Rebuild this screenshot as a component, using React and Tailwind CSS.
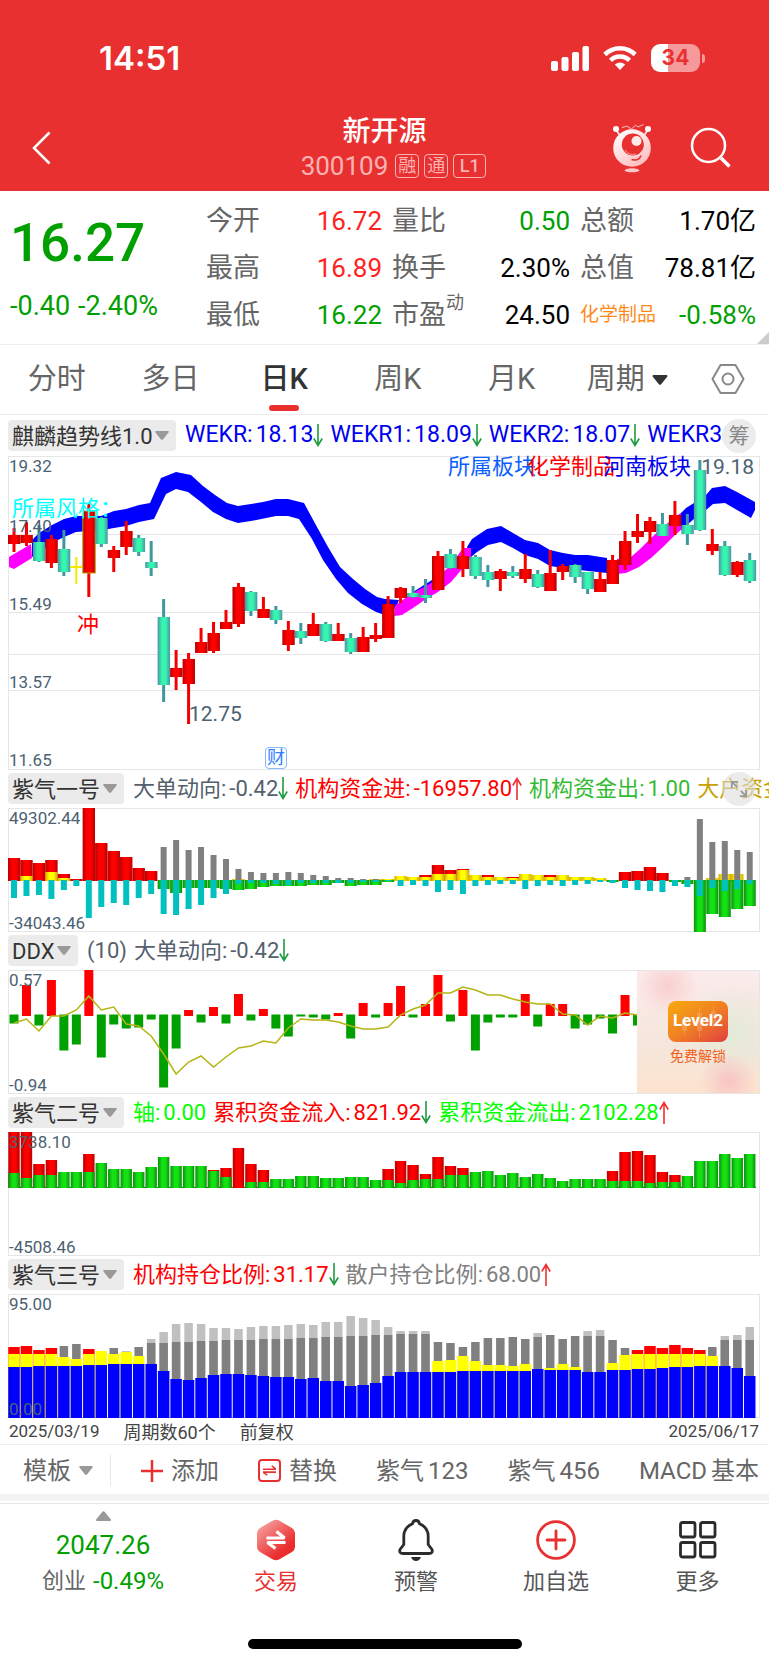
import React, { useState } from 'react';
import clsx from 'clsx';

// centre of the i-th of the 60 sessions, in chart units
const STEP = 12.47;
const cx = (i) => 6 + STEP * i;

// [high, body top, body bottom, low, kind]
const CANDLES = [
  [72, 79, 88, 96, 'r'], [66, 79, 87, 90, 'r'], [69, 86, 105, 106, 'g'], [79, 83, 107, 112, 'r'], [74, 93, 116, 120, 'g'],
  [101, 111, 112, 128, 'y'], [48, 55, 117, 141, 'h'], [61, 62, 88, 91, 'g'], [90, 94, 102, 116, 'r'], [65, 75, 91, 99, 'r'],
  [79, 82, 96, 100, 'g'], [85, 106, 112, 120, 'g'], [143, 161, 229, 246, 'g'], [194, 212, 221, 234, 'r'], [197, 203, 228, 268, 'r'],
  [172, 186, 197, 197, 'r'], [166, 177, 195, 197, 'r'], [154, 166, 173, 173, 'r'], [127, 131, 168, 171, 'r'], [135, 136, 155, 160, 'g'],
  [141, 153, 162, 162, 'r'], [150, 154, 164, 168, 'g'], [165, 174, 189, 195, 'r'], [167, 175, 182, 188, 'g'], [157, 168, 180, 180, 'r'],
  [166, 168, 185, 186, 'g'], [167, 178, 185, 185, 'r'], [177, 182, 196, 198, 'g'], [171, 181, 196, 196, 'r'], [167, 179, 183, 186, 'r'],
  [140, 148, 182, 182, 'r'], [131, 132, 142, 147, 'r'], [130, 137, 141, 142, 'g'], [123, 139, 142, 147, 'g'], [95, 100, 134, 134, 'r'],
  [93, 98, 112, 113, 'g'], [85, 100, 113, 121, 'r'], [99, 101, 120, 123, 'g'], [109, 116, 124, 131, 'g'], [113, 115, 123, 135, 'r'],
  [110, 116, 120, 122, 'g'], [98, 113, 123, 127, 'r'], [114, 118, 131, 132, 'g'], [94, 117, 135, 135, 'r'], [108, 110, 116, 124, 'r'],
  [108, 109, 121, 127, 'g'], [116, 116, 133, 138, 'g'], [116, 123, 136, 136, 'r'], [99, 104, 128, 128, 'r'], [75, 85, 109, 114, 'r'],
  [58, 75, 81, 87, 'r'], [61, 65, 76, 88, 'r'], [57, 68, 80, 80, 'g'], [45, 59, 70, 79, 'r'], [58, 69, 78, 89, 'g'],
  [4, 14, 74, 75, 'g'], [73, 88, 95, 99, 'r'], [85, 90, 119, 120, 'g'], [105, 106, 119, 121, 'r'], [97, 104, 125, 127, 'g'],
];

const BLUE_BANDS = [
  '24,84 31,77 44,69 56,63 68,60 93,60 106,55 118,53 131,49 142,47 153,22 168,16 183,19 195,30 207,39 219,47 230,50 243,48 255,46 268,43 280,43 296,47 309,71 320,91 332,111 345,123 357,133 369,141 377,143 391,144 388,152 374,158 368,156 354,148 340,137 328,123 315,104 304,83 291,63 280,60 268,60 243,65 230,67 218,63 205,56 193,46 180,36 168,33 158,38 146,63 131,66 118,70 106,72 95,74 68,76 56,81 44,87 24,101',
  '405,136 424,124 424,128 405,138',
  '459,91 464,83 479,73 493,70 505,77 517,84 530,87 542,94 555,97 567,99 580,99 599,102 599,117 580,115 555,112 542,110 530,103 517,99 505,92 493,86 480,89 469,96 463,101',
  '671,59 678,52 686,47 698,39 704,32 717,30 729,36 747,46 747,54 743,62 729,54 717,47 705,48 698,54 686,63 673,74',
];

const PINK_BANDS = [
  '1,101 23,88 24,102 6,113 1,111',
  '387,150 393,145 405,137 423,127 443,109 455,92 463,92 463,101 455,112 443,126 430,136 418,143 405,152 394,159 386,160',
  '609,103 623,101 631,94 643,82 655,71 667,61 673,57 673,74 667,79 655,91 643,102 631,111 618,117 609,118',
];

// fund flow, bar heights from the zero line
const FLOW_RED = { 0: 23, 1: 21, 2: 18, 3: 21, 4: 7, 5: 2, 6: 73, 7: 38, 8: 30, 9: 24, 10: 13, 11: 10, 33: 6, 34: 16, 35: 11, 36: 12, 38: 6, 40: 4, 43: 6, 49: 9, 50: 10, 51: 14, 52: 8 };
const FLOW_YELLOW = { 1: 5, 3: 9, 4: 3, 18: 2, 29: 2, 30: 2, 31: 5, 32: 4, 33: 4, 34: 7, 35: 7, 36: 11, 37: 6, 38: 4, 39: 4, 40: 3, 41: 7, 42: 6, 43: 4, 44: 6, 45: 4, 46: 4, 47: 3, 56: 3, 57: 7, 58: 7 };
const FLOW_GRAY = { 12: 34, 13: 41, 14: 31, 15: 34, 16: 26, 17: 22, 18: 12, 19: 9, 20: 8, 21: 8, 22: 9, 23: 8, 24: 6, 25: 5, 26: 3, 27: 3, 28: 2, 29: 2, 30: 1, 54: 4, 55: 62, 56: 39, 57: 40, 58: 31, 59: 29 };
const FLOW_GREEN = { 12: 9, 13: 13, 14: 8, 15: 8, 16: 8, 17: 9, 18: 10, 19: 9, 20: 7, 21: 6, 22: 6, 23: 6, 24: 5, 25: 5, 26: 3, 27: 6, 28: 5, 29: 5, 30: 2, 48: 2, 53: 2, 54: 4, 55: 52, 56: 34, 57: 37, 58: 29, 59: 26 };
const FLOW_CYAN = [18, 16, 15, 19, 10, 6, 38, 27, 23, 25, 18, 14, 34, 35, 29, 25, 18, 14, 4, 3, 3, 4, 5, 3, 3, 3, 3, 3, 2, 2, 1, 6, 5, 6, 12, 10, 14, 6, 5, 4, 4, 9, 6, 5, 6, 5, 4, 2, 3, 8, 10, 11, 12, 6, 7, 16, 8, 11, 9, 4];

const DDX = [-9, 31, -11, 36, -36, -30, 47, -43, -10, -14, -13, -5, -73, -34, 6, -8, 9, -9, 22, -6, 7, -14, -22, -2, -3, -5, 3, -24, 13, -3, 13, 30, -3, 12, 41, -7, 26, -36, -8, -3, -3, 22, -12, 12, 12, -14, -10, -4, -19, 21, -11];
const DDX_LINE = [53, 49, 61, 46, 46, 40, 26, 40, 37, 54, 56, 66, 84, 104, 92, 86, 97, 87, 78, 76, 71, 73, 58, 49, 50, 50, 52, 56, 59, 59, 57, 45, 39, 35, 23, 23, 17, 20, 25, 25, 29, 32, 34, 34, 44, 45, 55, 46, 48, 43, 45];

const TOTAL_GREEN = [15, 10, 13, 13, 16, 16, 16, 25, 19, 19, 16, 21, 31, 22, 22, 22, 17, 11, 0, 6, 6, 9, 9, 12, 12, 10, 10, 11, 11, 8, 8, 5, 8, 9, 9, 13, 13, 16, 17, 13, 15, 11, 14, 10, 7, 9, 9, 9, 7, 7, 7, 5, 6, 6, 12, 27, 27, 34, 30, 34];
const TOTAL_RED = { 0: 57, 1: 57, 2: 24, 3: 28, 6: 34, 16: 18, 17: 20, 18: 40, 19: 24, 20: 18, 30: 19, 31: 27, 32: 23, 33: 14, 34: 31, 35: 22, 36: 20, 48: 17, 49: 36, 50: 37, 51: 33, 52: 16, 53: 13 };

const HOLD_BLUE = [51, 51, 52, 52, 52, 52, 53, 53, 54, 54, 54, 54, 47, 39, 38, 40, 43, 44, 44, 43, 42, 41, 41, 39, 40, 37, 37, 32, 33, 35, 42, 46, 46, 46, 46, 46, 47, 47, 47, 47, 47, 47, 49, 48, 48, 48, 46, 46, 48, 48, 49, 49, 50, 51, 51, 52, 52, 52, 50, 42];
const HOLD_YELLOW = { 0: 64, 1: 64, 2: 64, 3: 64, 4: 61, 5: 59, 6: 64, 7: 67, 8: 64, 9: 66, 10: 62, 34: 57, 35: 58, 36: 62, 37: 57, 38: 53, 39: 53, 40: 52, 41: 54, 43: 50, 44: 54, 45: 51, 48: 55, 49: 63, 50: 64, 51: 64, 52: 64, 53: 64, 54: 64, 55: 64, 56: 62 };
const HOLD_RED = { 0: 71, 1: 72, 2: 68, 3: 70, 6: 69, 50: 68, 51: 72, 52: 70, 53: 73, 54: 70, 55: 68 };
const HOLD_DARK = { 4: 72, 5: 74, 8: 70, 10: 71, 11: 75, 12: 75, 13: 76, 14: 76, 15: 77, 16: 77, 17: 78, 18: 78, 19: 78, 20: 79, 21: 79, 22: 79, 23: 80, 24: 80, 25: 81, 26: 81, 27: 82, 28: 82, 29: 83, 30: 83, 31: 84, 32: 84, 33: 84, 34: 76, 35: 75, 36: 71, 37: 76, 38: 80, 39: 80, 40: 81, 41: 79, 42: 81, 43: 83, 44: 79, 45: 82, 46: 82, 47: 82, 48: 78, 49: 70, 56: 71, 57: 78, 58: 78, 59: 78 };
const HOLD_LIGHT = { 9: 67, 11: 79, 12: 86, 13: 94, 14: 95, 15: 94, 16: 90, 17: 90, 18: 89, 19: 91, 20: 92, 21: 92, 22: 93, 23: 94, 24: 93, 25: 96, 26: 96, 27: 102, 28: 100, 29: 98, 30: 91, 31: 87, 32: 87, 33: 87, 42: 85, 46: 87, 47: 88, 57: 82, 58: 83, 59: 91 };

const Bars = ({ data, base, width, fill, down }) =>
  Object.entries(data).map(([i, h]) => (
    <rect key={i} x={cx(Number(i)) - width / 2} y={down ? base : base - h} width={width} height={h} fill={fill} />
  ));

function Chart({ height, lines = [], children }) {
  return (
    <svg
      viewBox={`0 0 752 ${height}`}
      preserveAspectRatio="none"
      className={clsx('block w-full', height === 314 ? 'h-[314px]' : 'h-[124px]')}
      aria-hidden="true"
    >
      <rect x="0.5" y="0.5" width="751" height={height - 1} fill="#fff" stroke="#e6e6e6" />
      {lines.map((y) => (
        <line key={y} x1="0" x2="752" y1={y + 0.5} y2={y + 0.5} stroke="#e6e6e6" />
      ))}
      {children}
    </svg>
  );
}

function Gradients() {
  const items = [
    ['gRed', '#b80000', '#ff0000'],
    ['gTeal', '#4a93a6', '#36f5ae'],
    ['gGreen', '#0a8f0a', '#14e014'],
    ['gYellow', '#d9a800', '#ffff00'],
  ];
  return (
    <svg className="absolute size-0" aria-hidden="true">
      <defs>
        {items.map(([id, edge, mid]) => (
          <linearGradient key={id} id={id}>
            <stop offset="0" stopColor={edge} />
            <stop offset="0.35" stopColor={mid} />
            <stop offset="0.65" stopColor={mid} />
            <stop offset="1" stopColor={edge} />
          </linearGradient>
        ))}
      </defs>
    </svg>
  );
}

function Candle({ i, d }) {
  const [high, top, bottom, low, kind] = d;
  const x = cx(i);
  if (kind === 'y') {
    return <path d={`M${x} ${high}V${low}M${x - 6} ${top}H${x + 6}`} stroke="#f5e800" strokeWidth="2" />;
  }
  const green = kind === 'g';
  return (
    <g>
      <rect x={x - 1.5} y={high} width="3" height={low - high} fill={green ? '#3f97a0' : '#f50000'} />
      <rect
        x={x - 6}
        y={top}
        width="12.4"
        height={bottom - top}
        fill={green ? 'url(#gTeal)' : 'url(#gRed)'}
        stroke={kind === 'h' ? '#b8a000' : 'none'}
      />
    </g>
  );
}

function Arrow({ up }) {
  return (
    <svg viewBox="0 0 10 23" className="h-[23px] w-[10px] shrink-0" fill="none" strokeWidth="1.6" aria-hidden="true">
      {up ? (
        <path d="M5 23V1M0.8 8.500L5 1.500L9.200 8.500" stroke="#f03030" />
      ) : (
        <path d="M5 0V22M0.800 14.500L5 21.500L9.200 14.500" stroke="#1f9c40" />
      )}
    </svg>
  );
}

function Caret({ className, up }) {
  return (
    <svg viewBox="0 0 14 9" className={clsx('pointer-events-none shrink-0', className)} fill="currentColor" aria-hidden="true">
      <path d={up ? 'M1 9H13Q14.300 8.500 13.500 7.500L8 .6Q7 -.3 6 .6L.5 7.500Q-.3 8.500 1 9Z' : 'M1 0H13Q14.300 .5 13.500 1.500L8 8.400Q7 9.300 6 8.400L.5 1.500Q-.3 .5 1 0Z'} />
    </svg>
  );
}

function IndicatorSelect({ name }) {
  return (
    <label className="mr-[2px] flex h-[31px] shrink-0 items-center rounded bg-[#ebebeb] pr-[7px] pl-1 text-[22px] text-[#333]">
      <select className="h-full appearance-none bg-transparent outline-none" aria-label="指标">
        <option>{name}</option>
      </select>
      <Caret className="ml-[2px] h-[9px] w-[14px] text-[#999]" />
    </label>
  );
}

// one "label:value" reading next to the indicator name
function Reading({ label, value, trend, color }) {
  return (
    <span className={clsx('flex shrink-0 items-center gap-[3px]', color)}>
      <span>{label}:</span>
      <span className="flex items-center">
        {value}
        {trend && <Arrow up={trend === 'up'} />}
      </span>
    </span>
  );
}

function PanelHeader({ name, children, className }) {
  return (
    <div className={clsx('flex items-center gap-[7px] overflow-hidden text-[22px] whitespace-nowrap', className || 'h-[38px] pb-[2px]')}>
      <IndicatorSelect name={name} />
      {children}
    </div>
  );
}

function AxisLabel({ className, children }) {
  return <span className={clsx('absolute left-px text-[17px] leading-5 text-[#4c6172]', className)}>{children}</span>;
}

function StatusBar() {
  return (
    <div className="flex h-[104px] items-center justify-between pt-[12px] pr-[64px] pl-[99px] text-white">
      <span className="font-['Inter'] text-[33px] leading-9 font-semibold">14:51</span>
      <div className="flex items-center gap-[14px]">
        <svg viewBox="0 0 38 25" className="h-[25px] w-[38px]" fill="currentColor" aria-hidden="true">
          <rect x="0" y="15" width="7" height="10" rx="2" />
          <rect x="10.500" y="11" width="7" height="14" rx="2" />
          <rect x="21" y="6" width="7" height="19" rx="2" />
          <rect x="31.500" y="0" width="6.500" height="25" rx="2" />
        </svg>
        <svg viewBox="0 0 34 24" className="h-[24px] w-[34px]" fill="none" stroke="currentColor" strokeWidth="4.500" aria-hidden="true">
          <path d="M1.800 8.500C10.500 .2 23.500 .2 32.200 8.500" />
          <path d="M7.500 14.300C13 9.200 21 9.200 26.500 14.300" />
          <path d="M17 24L11.800 18.600Q17 14.200 22.200 18.600Z" fill="currentColor" stroke="none" />
        </svg>
        <div className="flex items-center">
          <div className="flex h-[28px] w-[49px] items-center justify-center rounded-[9px] bg-linear-to-r from-white from-35% to-[#f59a9a] to-35% font-['Inter'] text-[21px] font-bold text-[#e93030]">
            34
          </div>
          <div className="ml-[2px] h-[9px] w-[3px] rounded-r bg-[#f59a9a]" />
        </div>
      </div>
    </div>
  );
}

function Mascot() {
  return (
    <svg viewBox="0 0 40 50" className="h-[50px] w-[40px]" fill="none" aria-hidden="true">
      <defs>
        <linearGradient id="mascot" x1="0.2" y1="0" x2="0.8" y2="1">
          <stop offset="0" stopColor="#fff" />
          <stop offset="1" stopColor="#ffb9bb" />
        </linearGradient>
      </defs>
      <path d="M4 7L8.500 13M36 7L31.500 13" stroke="#fff" strokeWidth="1.500" />
      <circle cx="4" cy="6" r="3" fill="#fff" />
      <circle cx="36" cy="6" r="3" fill="#fff" />
      <path d="M10 4.500L15 3.200L19.500 6L23.500 2.200L26 4L31.500 1.500" stroke="#fff" strokeOpacity="0.7" />
      <circle cx="20" cy="25" r="18.800" fill="url(#mascot)" />
      <circle cx="20.800" cy="21.500" r="11" fill="#e93030" />
      <path d="M13 27A10 10 0 0 0 24 31" stroke="#ff9a9a" />
      <circle cx="24.500" cy="18" r="5" fill="#ffeaea" />
      <path d="M19.500 36.500Q27 38.500 29 32.500" stroke="#e93030" strokeWidth="1.500" />
      <ellipse cx="20" cy="47.300" rx="7.500" ry="2" fill="#ffc9c9" />
    </svg>
  );
}

function StockHeader() {
  return (
    <div className="grid h-[87px] grid-cols-3 items-center px-[31px]">
      <button aria-label="返回" className="justify-self-start text-white">
        <svg viewBox="0 0 20 34" className="h-[34px] w-[20px]" fill="none" stroke="currentColor" strokeWidth="2.500" aria-hidden="true">
          <path d="M18.500 1.500L3 17L18.500 32.500" />
        </svg>
      </button>
      <div className="flex flex-col items-center">
        <h1 className="text-[28px] leading-9 font-medium text-white">新开源</h1>
        <div className="flex items-center gap-[5px] pl-[18px] text-[#f9b3b3]">
          <span className="mr-[2px] text-[26px] leading-8">300109</span>
          <span className="flex size-6 shrink-0 items-center justify-center rounded border border-current text-[18px] leading-none">融</span>
          <span className="flex size-6 shrink-0 items-center justify-center rounded border border-current text-[18px] leading-none">通</span>
          <span className="flex h-6 w-[33px] shrink-0 items-center justify-center rounded border border-current text-[18px] leading-none font-medium">L1</span>
        </div>
      </div>
      <div className="flex items-center justify-end gap-[38px] pr-[7px]">
        <button aria-label="智能助手"><Mascot /></button>
        <button aria-label="搜索" className="text-white">
          <svg viewBox="0 0 41 41" className="size-[41px]" fill="none" stroke="currentColor" strokeWidth="2.500" aria-hidden="true">
            <circle cx="18.500" cy="18.500" r="16.500" />
            <path d="M31 31L39.500 39.500" strokeWidth="3.500" />
          </svg>
        </button>
      </div>
    </div>
  );
}

const UP = 'text-[#ff2222]';
const DOWN = 'text-[#00a000]';

const QUOTES = [
  ['今开', '16.72', UP], ['量比', '0.50', DOWN], ['总额', '1.70亿', 'text-black'],
  ['最高', '16.89', UP], ['换手', '2.30%', 'text-black'], ['总值', '78.81亿', 'text-black'],
  ['最低', '16.22', DOWN], ['市盈', '24.50', 'text-black', '动'], ['化学制品', '-0.58%', DOWN],
];

function Quote() {
  return (
    <section className="relative flex h-[154px] border-b border-[#ededed] pt-[7px] pr-[13px] pl-[10px]">
      <div className="flex w-[196px] shrink-0 flex-col text-[#00a000]">
        <span className="pt-[14px] text-[53px] leading-[62px] font-medium">16.27</span>
        <span className="mt-4 flex gap-2 text-[27px] leading-8">
          <span>-0.40</span>
          <span>-2.40%</span>
        </span>
      </div>
      <dl className="grid flex-1 grid-cols-[176fr_178fr_176fr] content-start gap-x-[10px] text-[26px]">
        {QUOTES.map(([label, value, color, sup]) => (
          <div key={label} className="flex h-[47px] items-center justify-between">
            <dt className={label.length > 2 ? 'text-[19px] text-[#ff8a1c]' : 'relative text-[27px] text-[#666]'}>
              {label}
              {sup && <sup className="absolute top-[-4px] left-full text-[18px] leading-6">{sup}</sup>}
            </dt>
            <dd className={color}>{value}</dd>
          </div>
        ))}
      </dl>
      <svg viewBox="0 0 12 12" className="absolute right-0 bottom-0 size-3" aria-hidden="true">
        <path d="M12 0V12H0Z" fill="#ccc" />
      </svg>
    </section>
  );
}

const PERIODS = ['分时', '多日', '日K', '周K', '月K'];

function PeriodTabs() {
  const [active, setActive] = useState('日K');
  return (
    <nav className="flex h-[70px] items-stretch border-b border-[#ededed] text-[29px] text-[#666]">
      {PERIODS.map((p) => (
        <button
          key={p}
          onClick={() => setActive(p)}
          className={clsx('relative flex-[114]', p === active && 'font-medium text-[#333]')}
        >
          {p}
          {p === active && <span className="absolute bottom-[3px] left-1/2 h-[6px] w-[30px] -translate-x-1/2 rounded-full bg-[#e93030]" />}
        </button>
      ))}
      <label className="flex flex-[118] items-center justify-center">
        <select className="appearance-none bg-transparent outline-none" aria-label="更多周期">
          <option>周期</option>
        </select>
        <Caret className="ml-[6px] h-[10px] w-[16px] text-[#333]" />
      </label>
      <button aria-label="图表设置" className="flex flex-[83] items-center justify-center pb-[2px] text-[#888]">
        <svg viewBox="0 0 34 32" className="h-[32px] w-[34px]" fill="none" stroke="currentColor" strokeWidth="2" strokeLinejoin="round" aria-hidden="true">
          <path d="M9.500 2H24.500L32.500 16L24.500 30H9.500L1.500 16Z" />
          <circle cx="17" cy="16" r="5.500" />
        </svg>
      </button>
    </nav>
  );
}

function MainChart() {
  return (
    <section>
      <div className="relative">
        <PanelHeader name="麒麟趋势线1.0" className="mr-[39px] h-[41px]">
          <div className="flex items-center gap-[7px] text-[23px] text-[#0000f0]">
            <Reading label="WEKR" value="18.13" trend="down" />
            <Reading label="WEKR1" value="18.09" trend="down" />
            <Reading label="WEKR2" value="18.07" trend="down" />
            <Reading label="WEKR3" value="18.05" trend="down" />
          </div>
        </PanelHeader>
        <button className="absolute top-[4px] right-1 size-[34px] rounded-full bg-[#ececec] text-[21px] leading-none text-[#888]">筹</button>
      </div>
      <div className="relative">
        <Chart height={314} lines={[78, 156, 198, 234]}>
          {BLUE_BANDS.map((p) => <polygon key={p} points={p} fill="#0000ff" />)}
          {PINK_BANDS.map((p) => <polygon key={p} points={p} fill="#ff00ff" />)}
          {CANDLES.map((d, i) => <Candle key={i} i={i} d={d} />)}
        </Chart>
        <AxisLabel className="top-0">19.32</AxisLabel>
        <AxisLabel className="top-[60px]">17.40</AxisLabel>
        <AxisLabel className="top-[138px]">15.49</AxisLabel>
        <AxisLabel className="top-[216px]">13.57</AxisLabel>
        <AxisLabel className="top-[294px]">11.65</AxisLabel>
        <span className="absolute top-[39px] left-1 text-[22px] leading-7 text-[#00ffff]">所属风格：</span>
        <span className="absolute top-[155px] left-[69px] text-[22px] leading-7 text-[#ff0000]">冲</span>
        <span className="absolute top-[244px] left-[181px] text-[21px] leading-7 text-[#4c6172]">12.75</span>
        <span className="absolute bottom-px left-[257px] flex size-[22px] items-center justify-center rounded-sm border border-[#8ab8ff] text-[18px] leading-none text-[#2f7fff]">财</span>
        <span className="absolute top-[-3px] left-[440px] text-[22px] leading-7 text-[#0a60ff]">所属板块:</span>
        <span className="absolute top-[-3px] left-[519px] text-[22px] leading-7 text-[#ff0000]">化学制品</span>
        <span className="absolute top-[-3px] left-[595px] text-[22px] leading-7 text-[#0000f0]">河南板块</span>
        <span className="absolute top-[-3px] right-[6px] text-[21px] leading-7 text-[#4c6172]">19.18</span>
      </div>
    </section>
  );
}

function FlowChart() {
  return (
    <section>
      <div className="relative -mr-[9px]">
        <PanelHeader name="紫气一号">
          <Reading label="大单动向" value="-0.42" trend="down" color="text-[#55606c]" />
          <Reading label="机构资金进" value="-16957.80" trend="up" color="text-[#ff0000]" />
          <Reading label="机构资金出" value="1.00" color="text-[#33bb33]" />
          <Reading label="大户资金进" value="1.00" color="text-[#c8a000]" />
        </PanelHeader>
        <button aria-label="放大" className="absolute top-[2px] right-[13px] flex size-[34px] items-center justify-center rounded-full bg-[#dddddd]/60 text-[#999]">
          <svg viewBox="0 0 20 20" className="size-[18px]" fill="none" stroke="currentColor" strokeWidth="2" aria-hidden="true">
            <path d="M2 9V2H9M2 2L8 8M18 11V18H11M18 18L12 12" />
          </svg>
        </button>
      </div>
      <div className="relative">
        <Chart height={124}>
          <Bars data={FLOW_RED} base={73} width={12.4} fill="url(#gRed)" />
          <Bars data={FLOW_YELLOW} base={73} width={12.4} fill="url(#gYellow)" />
          <Bars data={FLOW_GREEN} base={72} width={12} fill="url(#gGreen)" down />
          <Bars data={FLOW_GRAY} base={73} width={6} fill="#808080" />
          <Bars data={FLOW_CYAN} base={72} width={6} fill="#00c0c0" down />
        </Chart>
        <AxisLabel className="top-0">49302.44</AxisLabel>
        <AxisLabel className="top-[105px]">-34043.46</AxisLabel>
      </div>
    </section>
  );
}

function Level2Promo() {
  return (
    <div className="absolute inset-y-px right-px flex w-[122px] flex-col items-center justify-center gap-1 bg-[radial-gradient(circle_at_25%_12%,#f9cfcf_0,transparent_22%),radial-gradient(circle_at_75%_90%,#f8c4c4_0,transparent_20%),radial-gradient(circle_at_78%_50%,#e3ead8_0,transparent_45%),linear-gradient(#fcebec,#f5e6dc_60%,#fce3cd)]">
      <button className="relative mt-[2px] h-[41px] w-[60px] rounded-lg bg-linear-to-br from-[#f7ab0a] via-[#f08020] to-[#df3a3c] text-[17px] font-bold text-white">
        <svg viewBox="0 0 60 41" className="absolute inset-0 size-full" fill="#fff" fillOpacity="0.18" aria-hidden="true">
          <path d="M14 18h5v12h-5zM16 14h1v20h-1zM29 12h5v18h-5zM31 6h1v31h-1zM43 10h5v12h-5zM45 5h1v22h-1z" />
        </svg>
        <span className="relative">Level2</span>
      </button>
      <a href="#level2" className="text-[14px] leading-5 text-[#f0601c]">免费解锁</a>
    </div>
  );
}

function DdxChart() {
  return (
    <section>
      <PanelHeader name="DDX">
        <span className="text-[#55606c]">(10)</span>
        <Reading label="大单动向" value="-0.42" trend="down" color="text-[#55606c]" />
      </PanelHeader>
      <div className="relative">
        <Chart height={124}>
          {DDX.map((v, i) => (
            <rect
              key={i}
              x={cx(i) - 4.5}
              y={v > 0 ? 46 - v : 44.5}
              width="9"
              height={Math.abs(v)}
              fill={v > 0 ? '#ff0000' : '#00a000'}
            />
          ))}
          <polyline points={DDX_LINE.map((y, i) => `${cx(i)},${y}`).join(' ')} fill="none" stroke="#b4b414" strokeWidth="1.5" />
        </Chart>
        <AxisLabel className="top-0">0.57</AxisLabel>
        <AxisLabel className="top-[105px]">-0.94</AxisLabel>
        <Level2Promo />
      </div>
    </section>
  );
}

function TotalChart() {
  return (
    <section>
      <PanelHeader name="紫气二号">
        <Reading label="轴" value="0.00" color="text-[#00ff00]" />
        <Reading label="累积资金流入" value="821.92" trend="down" color="text-[#ff0000]" />
        <Reading label="累积资金流出" value="2102.28" trend="up" color="text-[#00ff00]" />
      </PanelHeader>
      <div className="relative">
        <Chart height={124}>
          <line x1="1" x2="748" y1="55.500" y2="55.500" stroke="#0a8f0a" />
          <Bars data={TOTAL_RED} base={56} width={11.4} fill="url(#gRed)" />
          <Bars data={TOTAL_GREEN} base={56} width={11.4} fill="url(#gGreen)" />
        </Chart>
        <AxisLabel className="top-0">3738.10</AxisLabel>
        <AxisLabel className="top-[105px]">-4508.46</AxisLabel>
      </div>
    </section>
  );
}

function HoldingChart() {
  return (
    <section>
      <PanelHeader name="紫气三号">
        <Reading label="机构持仓比例" value="31.17" trend="down" color="text-[#ff0000]" />
        <Reading label="散户持仓比例" value="68.00" trend="up" color="text-[#808080]" />
      </PanelHeader>
      <div className="relative">
        <Chart height={124}>
          <Bars data={HOLD_LIGHT} base={124} width={8.5} fill="#c0c0c0" />
          <Bars data={HOLD_DARK} base={124} width={8.5} fill="#808080" />
          <Bars data={HOLD_RED} base={124} width={11.5} fill="#ff0000" />
          <Bars data={HOLD_YELLOW} base={124} width={11.5} fill="#ffff00" />
          <Bars data={HOLD_BLUE} base={124} width={11.5} fill="#0000ff" />
        </Chart>
        <AxisLabel className="top-0">95.00</AxisLabel>
        <AxisLabel className="top-[105px]">0.00</AxisLabel>
      </div>
      <div className="flex h-[26px] items-center gap-6 px-px pt-[2px] text-[18px] text-[#444]">
        <time className="text-[17px]">2025/03/19</time>
        <span>周期数60个</span>
        <span>前复权</span>
        <time className="ml-auto text-[17px]">2025/06/17</time>
      </div>
    </section>
  );
}

function Swap({ className }) {
  return (
    <svg viewBox="0 0 20 14" className={className} fill="none" stroke="currentColor" strokeWidth="2.500" aria-hidden="true">
      <path d="M0 5H20L13.500 0M20 9.500H0L6.500 14" strokeLinejoin="bevel" />
    </svg>
  );
}

function Toolbar() {
  return (
    <div className="flex h-[50px] items-center overflow-hidden border-t border-[#ededed] pt-[2px] pl-[23px] text-[24px] whitespace-nowrap text-[#666]">
      <label className="flex h-[31px] shrink-0 items-center border-r border-[#e6e6e6] pr-[17px]">
        <select className="appearance-none bg-transparent outline-none" aria-label="模板">
          <option>模板</option>
        </select>
        <Caret className="ml-2 h-[9px] w-[14px] text-[#999]" />
      </label>
      <button className="ml-[30px] flex shrink-0 items-center gap-2">
        <svg viewBox="0 0 22 22" className="size-[22px] text-[#e93030]" stroke="currentColor" strokeWidth="2.500" aria-hidden="true">
          <path d="M11 0V22M0 11H22" />
        </svg>
        添加
      </button>
      <button className="ml-[39px] flex shrink-0 items-center gap-2">
        <span className="flex size-[23px] items-center justify-center rounded border-2 border-[#e93030] text-[#e93030]">
          <Swap className="h-[11px] w-[13px]" />
        </span>
        替换
      </button>
      <button className="ml-[39px] flex shrink-0 gap-1"><span>紫气</span><span>123</span></button>
      <button className="ml-[39px] flex shrink-0 gap-1"><span>紫气</span><span>456</span></button>
      <button className="ml-[39px] flex shrink-0 gap-1"><span>MACD</span><span>基本</span></button>
    </div>
  );
}

function NavItem({ label, active, children }) {
  return (
    <button className={clsx('flex flex-col items-center gap-[2px] pt-[14px] text-[22px] leading-9', active ? 'text-[#e93030]' : 'text-[#555]')}>
      <span className="flex h-[44px] items-center justify-center">{children}</span>
      {label}
    </button>
  );
}

function BottomNav() {
  return (
    <nav className="mt-[2px] grid h-[162px] grid-cols-[206fr_140fr_140fr_140fr_143fr] border-t border-[#e6e6e6]">
      <button className="flex flex-col items-center self-start pt-[7px]">
        <Caret up className="h-[10px] w-[17px] text-[#999]" />
        <span className="mt-2 text-[26px] leading-8 text-[#00a000]">2047.26</span>
        <span className="mt-1 flex items-center gap-[7px] text-[22px] leading-8 text-[#666]">
          创业 <span className="text-[24px] text-[#00a000]">-0.49%</span>
        </span>
      </button>
      <NavItem label="交易" active>
        <svg viewBox="0 0 38 42" className="h-[42px] w-[38px]" aria-hidden="true">
          <defs>
            <linearGradient id="trade" x1="0" y1="0" x2="0.8" y2="1">
              <stop offset="0" stopColor="#f8b0ae" />
              <stop offset="0.8" stopColor="#ea2c2e" />
            </linearGradient>
          </defs>
          <path d="M16 1.500Q19 0 22 1.500L35 9Q38 11 38 14V28Q38 31 35 33L22 40.500Q19 42 16 40.500L3 33Q0 31 0 28V14Q0 11 3 9Z" fill="url(#trade)" />
          <path d="M9.500 19H27.500L19.500 12.500M28.500 23.500H10.500L18.500 29.500" fill="none" stroke="#fff" strokeWidth="3.200" strokeLinejoin="bevel" />
        </svg>
      </NavItem>
      <NavItem label="预警">
        <svg viewBox="0 0 36 42" className="h-[42px] w-[36px]" fill="none" stroke="#2b2b2b" strokeWidth="2.800" strokeLinejoin="round" aria-hidden="true">
          <path d="M18 1.500C16 1.500 14.800 3 14.500 4.800C9 7 5.800 11.500 5.800 17.500V25.500L2 30.500Q.8 34.500 5 34.500H31Q35.200 34.500 34 30.500L30.200 25.500V17.500C30.200 11.500 27 7 21.500 4.800C21.200 3 20 1.500 18 1.500Z" />
          <path d="M13 38H23Q21.500 42 18 42Q14.500 42 13 38Z" fill="#2b2b2b" stroke="none" />
        </svg>
      </NavItem>
      <NavItem label="加自选">
        <svg viewBox="0 0 40 40" className="size-[40px]" fill="none" stroke="#e93030" strokeWidth="2.800" strokeLinecap="round" aria-hidden="true">
          <circle cx="20" cy="20" r="18.400" />
          <path d="M20 11V29M11 20H29" />
        </svg>
      </NavItem>
      <NavItem label="更多">
        <svg viewBox="0 0 38 38" className="size-[38px]" fill="none" stroke="#2b2b2b" strokeWidth="2.800" aria-hidden="true">
          <rect x="1.500" y="1.500" width="14.500" height="14.500" rx="2" />
          <rect x="21.500" y="1.500" width="14.500" height="14.500" rx="2" />
          <rect x="1.500" y="21.500" width="14.500" height="14.500" rx="2" />
          <rect x="21.500" y="21.500" width="14.500" height="14.500" rx="2" />
        </svg>
      </NavItem>
    </nav>
  );
}

export default function App() {
  return (
    <div className="relative min-h-screen overflow-hidden bg-white font-['Roboto','Noto_Sans_CJK_SC',sans-serif]">
      <Gradients />
      <header className="bg-[#e93030]">
        <StatusBar />
        <StockHeader />
      </header>
      <Quote />
      <PeriodTabs />
      <main className="pr-[9px] pl-2">
        <MainChart />
        <FlowChart />
        <DdxChart />
        <TotalChart />
        <HoldingChart />
      </main>
      <Toolbar />
      <div className="h-[7px] bg-[#f3f3f3]" />
      <BottomNav />
      <div className="flex justify-center">
        <div className="-mt-[26px] h-[10px] w-[274px] rounded-full bg-black" />
      </div>
    </div>
  );
}
